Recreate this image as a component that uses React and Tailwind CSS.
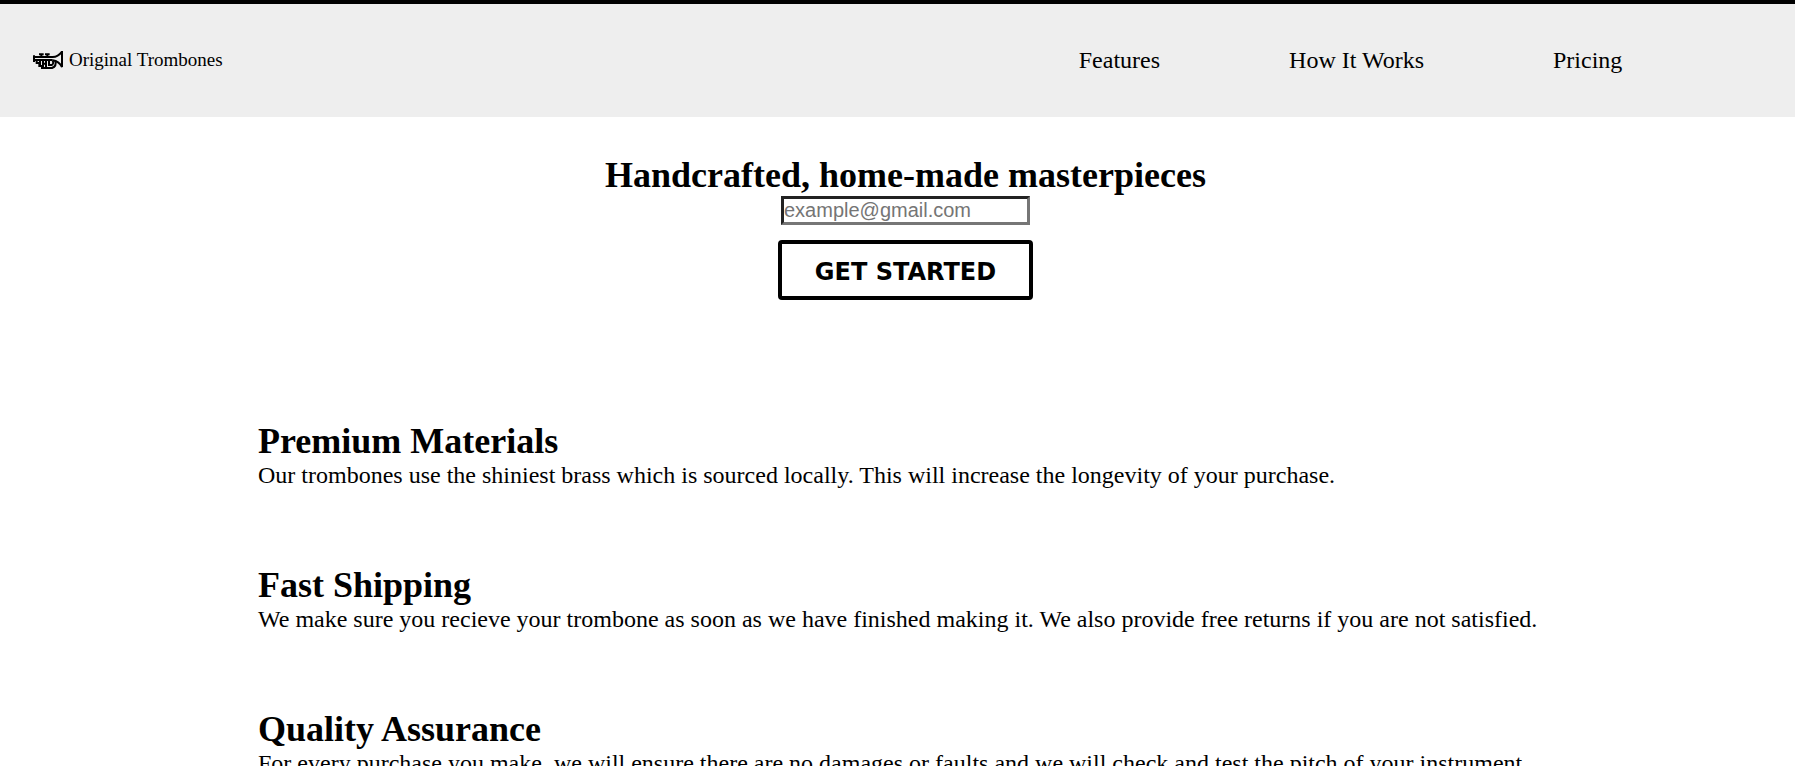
const NAV_LINKS = [
  { label: "Features", href: "#features" },
  { label: "How It Works", href: "#how-it-works" },
  { label: "Pricing", href: "#pricing" },
];

const FEATURES = [
  {
    title: "Premium Materials",
    text: "Our trombones use the shiniest brass which is sourced locally. This will increase the longevity of your purchase.",
  },
  {
    title: "Fast Shipping",
    text: "We make sure you recieve your trombone as soon as we have finished making it. We also provide free returns if you are not satisfied.",
  },
  {
    title: "Quality Assurance",
    text: "For every purchase you make, we will ensure there are no damages or faults and we will check and test the pitch of your instrument.",
  },
];

function HornIcon() {
  return (
    <svg
      viewBox="0 0 90 54"
      className="h-[18px] w-[30px] shrink-0"
      fill="none"
      stroke="#000"
      strokeWidth="6"
      aria-hidden="true"
    >
      <path d="M3 13v20" />
      <path d="M3 18h56c14 0 22-8 28-16v46c-6-11-14-18-28-20" />
      <path d="M3 27h56" />
      <path d="M18 10h14M36 10h14M25 10v8M43 10v8" />
      <path d="M11 28v8h8v9h8v6h30c10-4 13-12 10-22" />
      <path d="M21 28v16M30 28v22M39 28v22M30 38h9M48 28v14h8c6-3 6-9 2-12" />
    </svg>
  );
}

export default function App() {
  return (
    <div className="min-h-screen bg-white font-['Liberation_Serif',serif] text-2xl leading-7 text-black">
      <header className="flex h-[117px] items-center justify-between border-t-4 border-black bg-[#eee] pb-0.5 pl-[33px]">
        <a href="#top" className="flex items-center gap-[6px] text-[19px]">
          <HornIcon />
          <span>Original Trombones</span>
        </a>
        <nav className="mr-[9.8%] flex gap-[129px]">
          {NAV_LINKS.map((link) => (
            <a key={link.label} href={link.href}>
              {link.label}
            </a>
          ))}
        </nav>
      </header>

      <main>
        <section className="flex flex-col items-center pt-[38px] pl-4">
          <h1 className="text-4xl leading-[41px] font-bold">Handcrafted, home-made masterpieces</h1>
          <form className="flex flex-col items-center gap-[15px]" onSubmit={(e) => e.preventDefault()}>
            <input
              type="email"
              aria-label="Email address"
              placeholder="example@gmail.com"
              className="h-[29px] w-[249px] border-[3px] border-t-[#222] border-r-[#767676] border-b-[#767676] border-l-[#222] bg-white font-['Liberation_Sans',sans-serif] text-xl leading-[23px] placeholder:text-[#757575]"
            />
            <button
              type="submit"
              className="h-[60px] w-[255px] rounded border-4 border-black bg-white pt-1 font-['DejaVu_Sans',sans-serif] text-2xl font-bold"
            >
              GET STARTED
            </button>
          </form>
        </section>

        <section id="features" className="ml-[258px] flex flex-col gap-[76px] pt-[121px]">
          {FEATURES.map((feature) => (
            <article key={feature.title}>
              <h2 className="text-4xl leading-10 font-bold">{feature.title}</h2>
              <p>{feature.text}</p>
            </article>
          ))}
        </section>
      </main>
    </div>
  );
}
